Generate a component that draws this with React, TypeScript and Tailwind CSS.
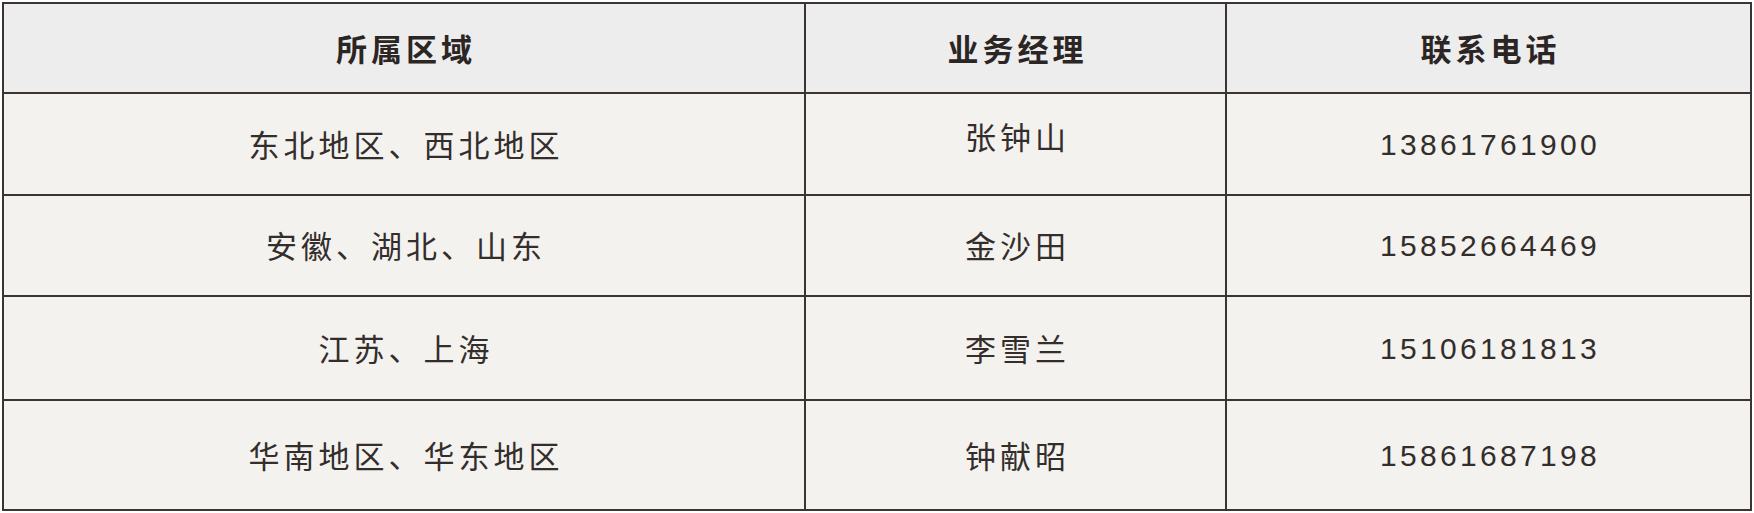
import React from 'react';

interface ContactRow {
  region: string;
  manager: string;
  phone: string;
  height: string;
  managerClass?: string;
}

// heights include the 2px top border (border-box)
const rows: ContactRow[] = [
  { region: '东北地区、西北地区', manager: '张钟山', phone: '13861761900', height: 'h-[102px]', managerClass: 'pb-4' },
  { region: '安徽、湖北、山东', manager: '金沙田', phone: '15852664469', height: 'h-[101px]' },
  { region: '江苏、上海', manager: '李雪兰', phone: '15106181813', height: 'h-[104px]' },
  { region: '华南地区、华东地区', manager: '钟献昭', phone: '15861687198', height: 'h-[110px]' },
];

const cjk = "font-['Noto_Sans_CJK_SC',sans-serif]";

const App: React.FC = () => {
  return (
    <div className="w-[1754px] h-[513px] bg-white pt-[2px] pl-[2px]">
      <div className="w-[1750px] border-2 border-[#3a3432] bg-[#f3f2ef] text-[#332d2b]">
        {/* Header */}
        <div className="flex h-[88px] bg-[#ededed] text-[#2b2524]">
          <div className={`w-[800px] flex items-center justify-center ${cjk} font-bold text-[31px] tracking-[4px] pl-[4px]`}>
            所属区域
          </div>
          <div className={`w-[421px] border-l-2 border-[#3a3432] flex items-center justify-center ${cjk} font-bold text-[31px] tracking-[4px] pl-[4px]`}>
            业务经理
          </div>
          <div className={`flex-1 border-l-2 border-[#3a3432] flex items-center justify-center ${cjk} font-bold text-[31px] tracking-[4px] pl-[4px]`}>
            联系电话
          </div>
        </div>

        {/* Body rows */}
        {rows.map((row) => (
          <div key={row.phone} className={`flex ${row.height} border-t-2 border-[#3a3432]`}>
            <div className={`w-[800px] flex items-center justify-center ${cjk} text-[31px] tracking-[4px] pl-[4px]`}>
              {row.region}
            </div>
            <div className={`w-[421px] border-l-2 border-[#3a3432] flex items-center justify-center ${cjk} text-[31px] tracking-[4px] pl-[4px] ${row.managerClass ?? ''}`}>
              {row.manager}
            </div>
            <div className="flex-1 border-l-2 border-[#3a3432] flex items-center justify-center font-['Liberation_Sans',Arial,sans-serif] text-[30px] tracking-[3.3px] pl-[3px]">
              {row.phone}
            </div>
          </div>
        ))}
      </div>
    </div>
  );
};

export default App;
